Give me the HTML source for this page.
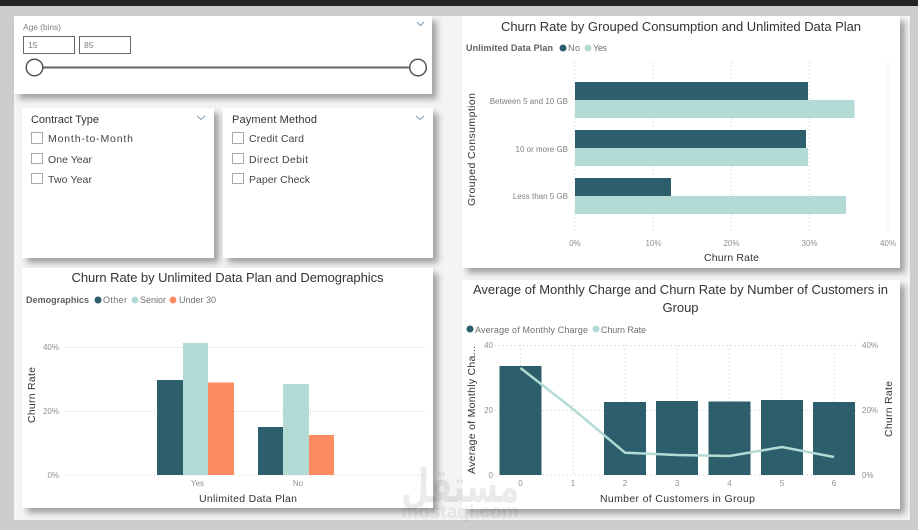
<!DOCTYPE html>
<html lang="en"><head><meta charset="utf-8"><title>Churn Dashboard</title>
<style>
html,body{margin:0;padding:0;width:918px;height:530px;overflow:hidden;background:#cdcdcd}
.top{position:absolute;left:0;top:0;width:918px;height:6px;background:#252525}
.canvas{position:absolute;left:14px;top:16px;width:896px;height:504px;background:#f4f4f4}
.c{position:absolute;background:#fff;box-shadow:5px 5px 6px rgba(0,0,0,.34)}
svg{position:absolute;left:0;top:0}
text{font-family:"Liberation Sans",sans-serif}
.t{font-size:13px;fill:#333;text-anchor:middle}
.a{font-size:10.5px;fill:#333}
.l{font-size:8px;fill:#808080}
.g{font-size:8px;fill:#909090}
.lg{font-size:9px;fill:#707070}
.b{font-size:9px;fill:#606060;font-weight:bold}
.s{font-size:10.5px;fill:#444}
.grid{stroke:#ccc;stroke-width:1;stroke-dasharray:1 3;fill:none}
.cb{fill:#fff;stroke:#aaa;stroke-width:1}
.ch{fill:none;stroke:#7f9bb0;stroke-width:1}
.wm{position:absolute;left:417px;top:459px;width:120px;text-align:center;font-family:"DejaVu Sans","Noto Sans CJK SC",sans-serif;font-weight:bold;font-size:46px;line-height:54px;color:rgba(0,0,0,.08);transform:scaleX(.7);transform-origin:center}
.wm2{position:absolute;left:400px;top:503px;width:120px;text-align:center;font-family:"Liberation Sans",sans-serif;font-weight:bold;font-size:19px;line-height:20px;color:rgba(0,0,0,.06)}
</style></head><body>
<div class="top"></div>
<div class="canvas"></div>
<div class="c" style="left:14px;top:16px;width:418px;height:78px"></div>
<div class="c" style="left:22px;top:108px;width:192px;height:150px"></div>
<div class="c" style="left:223px;top:108px;width:210px;height:150px"></div>
<div class="c" style="left:22px;top:268px;width:411px;height:240px"></div>
<div class="c" style="left:462px;top:16px;width:438px;height:252px"></div>
<div class="c" style="left:462px;top:280px;width:438px;height:229px"></div>
<svg width="918" height="530" viewBox="0 0 918 530">
<!-- age slicer -->
<text x="23" y="30" font-size="8.5" fill="#808080" textLength="38">Age (bins)</text>
<rect x="23.5" y="36.5" width="51" height="17" fill="#fff" stroke="#666"/>
<rect x="79.5" y="36.5" width="51" height="17" fill="#fff" stroke="#666"/>
<text x="28" y="48" font-size="8.5" fill="#808080">15</text>
<text x="84" y="48" font-size="8.5" fill="#808080">85</text>
<line x1="34" y1="67.5" x2="418" y2="67.5" stroke="#666" stroke-width="2"/>
<circle cx="34.5" cy="67.5" r="8.3" fill="#fff" stroke="#555" stroke-width="1.5"/>
<circle cx="418" cy="67.5" r="8.3" fill="#fff" stroke="#555" stroke-width="1.5"/>
<path class="ch" d="M417 22l3.500 3.500 3.500-3.500"/>
<!-- contract type -->
<text x="31" y="123" font-size="11" fill="#333" textLength="68">Contract Type</text>
<path class="ch" d="M197 116l4 3.500 4-3.500"/>
<rect class="cb" x="31.500" y="132.500" width="11" height="11"/>
<rect class="cb" x="31.500" y="153.500" width="11" height="10"/>
<rect class="cb" x="31.500" y="173.500" width="11" height="10"/>
<text class="s" x="48" y="142" textLength="85">Month-to-Month</text>
<text class="s" x="48" y="163" textLength="44">One Year</text>
<text class="s" x="48" y="183" textLength="44">Two Year</text>
<!-- payment -->
<text x="232" y="123" font-size="11" fill="#333" textLength="85">Payment Method</text>
<path class="ch" d="M416 116l4 3.500 4-3.500"/>
<rect class="cb" x="232.500" y="132.500" width="11" height="11"/>
<rect class="cb" x="232.500" y="153.500" width="11" height="10"/>
<rect class="cb" x="232.500" y="173.500" width="11" height="10"/>
<text class="s" x="249" y="142" textLength="55">Credit Card</text>
<text class="s" x="249" y="163" textLength="59">Direct Debit</text>
<text class="s" x="249" y="183" textLength="61">Paper Check</text>
<!-- demographics chart -->
<text class="t" x="227.500" y="282" textLength="312">Churn Rate by Unlimited Data Plan and Demographics</text>
<text class="b" x="26" y="303" textLength="63">Demographics</text>
<circle cx="98" cy="300" r="3.500" fill="#2c5f6b"/><text class="lg" x="103" y="303" textLength="24">Other</text>
<circle cx="135" cy="300" r="3.500" fill="#b3dad4"/><text class="lg" x="140" y="303" textLength="26">Senior</text>
<circle cx="173" cy="300" r="3.500" fill="#fe8c62"/><text class="lg" x="179" y="303" textLength="37">Under 30</text>
<path class="grid" d="M66 347.500H428M66 411.500H428M66 475H428"/>
<text class="g" x="59" y="350" text-anchor="end">40%</text>
<text class="g" x="59" y="414" text-anchor="end">20%</text>
<text class="g" x="59" y="478" text-anchor="end">0%</text>
<rect x="157" y="380" width="26" height="95" fill="#2c5f6b"/>
<rect x="183" y="343" width="25" height="132" fill="#b3dad4"/>
<rect x="208" y="382.500" width="26" height="92.500" fill="#fe8c62"/>
<rect x="258" y="427" width="25" height="48" fill="#2c5f6b"/>
<rect x="283" y="384" width="26" height="91" fill="#b3dad4"/>
<rect x="309" y="435" width="25" height="40" fill="#fe8c62"/>
<text class="g" x="197.500" y="486" text-anchor="middle">Yes</text>
<text class="g" x="298" y="486" text-anchor="middle">No</text>
<text class="a" x="199" y="502" textLength="98">Unlimited Data Plan</text>
<text class="a" transform="translate(35 423) rotate(-90)" textLength="56">Churn Rate</text>
<!-- consumption chart -->
<text class="t" x="681" y="31" textLength="360">Churn Rate by Grouped Consumption and Unlimited Data Plan</text>
<text class="b" x="466" y="51" textLength="87">Unlimited Data Plan</text>
<circle cx="563" cy="48" r="3.500" fill="#2c5f6b"/><text class="lg" x="568" y="51" textLength="12">No</text>
<circle cx="588" cy="48" r="3.500" fill="#b3dad4"/><text class="lg" x="593" y="51" textLength="14">Yes</text>
<path class="grid" d="M575 62V232M653.500 62V232M731.500 62V232M809.500 62V232M888 62V232"/>
<rect x="575" y="82" width="233" height="18" fill="#2c5f6b"/>
<rect x="575" y="100" width="279.500" height="18" fill="#b3dad4"/>
<rect x="575" y="130" width="231" height="18" fill="#2c5f6b"/>
<rect x="575" y="148" width="233" height="18" fill="#b3dad4"/>
<rect x="575" y="178" width="96" height="18" fill="#2c5f6b"/>
<rect x="575" y="196" width="271" height="18" fill="#b3dad4"/>
<text class="l" x="568" y="104" text-anchor="end">Between 5 and 10 GB</text>
<text class="l" x="568" y="152" text-anchor="end">10 or more GB</text>
<text class="l" x="568" y="199" text-anchor="end">Less than 5 GB</text>
<text class="g" x="575" y="246" text-anchor="middle">0%</text>
<text class="g" x="653.500" y="246" text-anchor="middle">10%</text>
<text class="g" x="731.500" y="246" text-anchor="middle">20%</text>
<text class="g" x="809.500" y="246" text-anchor="middle">30%</text>
<text class="g" x="888" y="246" text-anchor="middle">40%</text>
<text class="a" x="704" y="261" textLength="55">Churn Rate</text>
<text class="a" transform="translate(475 206) rotate(-90)" textLength="113">Grouped Consumption</text>
<!-- combo chart -->
<text class="t" x="680.500" y="294" textLength="415">Average of Monthly Charge and Churn Rate by Number of Customers in</text>
<text class="t" x="680.500" y="312" textLength="36">Group</text>
<circle cx="470" cy="329" r="3.500" fill="#2c5f6b"/><text class="lg" x="475" y="333" textLength="113">Average of Monthly Charge</text>
<circle cx="596" cy="329" r="3.500" fill="#b3dad4"/><text class="lg" x="601" y="333" textLength="45">Churn Rate</text>
<path class="grid" d="M495 345.500H858M495 410.500H858M495 475H858M520.500 345V475M573 345V475M625 345V475M677 345V475M729.500 345V475M782 345V475M834 345V475"/>
<rect x="499.500" y="366" width="42" height="109" fill="#2c5f6b"/>
<rect x="604" y="402" width="42" height="73" fill="#2c5f6b"/>
<rect x="656" y="401" width="42" height="74" fill="#2c5f6b"/>
<rect x="708.500" y="401.500" width="42" height="73.500" fill="#2c5f6b"/>
<rect x="761" y="400" width="42" height="75" fill="#2c5f6b"/>
<rect x="813" y="402" width="42" height="73" fill="#2c5f6b"/>
<polyline points="520.500,368 573,409 625,452.700 677,455 729.500,456 782,447 834,457" fill="none" stroke="#b3dad4" stroke-width="2.500"/>
<text class="g" x="493" y="348" text-anchor="end">40</text>
<text class="g" x="493" y="413" text-anchor="end">20</text>
<text class="g" x="493" y="478" text-anchor="end">0</text>
<text class="g" x="862" y="348">40%</text>
<text class="g" x="862" y="413">20%</text>
<text class="g" x="862" y="478">0%</text>
<text class="g" x="520.500" y="486" text-anchor="middle">0</text>
<text class="g" x="573" y="486" text-anchor="middle">1</text>
<text class="g" x="625" y="486" text-anchor="middle">2</text>
<text class="g" x="677" y="486" text-anchor="middle">3</text>
<text class="g" x="729.500" y="486" text-anchor="middle">4</text>
<text class="g" x="782" y="486" text-anchor="middle">5</text>
<text class="g" x="834" y="486" text-anchor="middle">6</text>
<text class="a" x="600" y="502" textLength="155">Number of Customers in Group</text>
<text class="a" transform="translate(475 474) rotate(-90)" textLength="128">Average of Monthly Cha...</text>
<text class="a" transform="translate(892 437) rotate(-90)" textLength="56">Churn Rate</text>
</svg>
<div class="wm" dir="rtl" lang="ar">مستقل</div>
<div class="wm2">mostaql.com</div>
</body></html>
